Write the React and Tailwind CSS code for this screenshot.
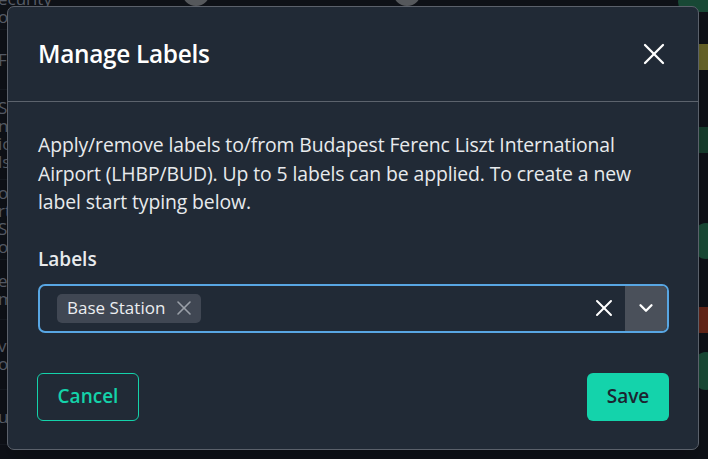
import { X, ChevronDown } from "lucide-react"

const font = { fontFamily: '"Open Sans", "Noto Sans", sans-serif' }

function Backdrop() {
  const leftRows = [
    { h: 'h-[44px]', t: ['ecurity', 'o'] },
    { h: 'h-[60px]', t: ['F'] },
    { h: 'h-[90px]', t: ['S', 'n', 'ic', 'ls'] },
    { h: 'h-[80px]', t: ['o', 'rt', 'S', 'or'] },
    { h: 'h-[60px]', t: ['e', 'm'] },
    { h: 'h-[70px]', t: ['v', 'or'] },
    { h: 'h-[55px]', t: ['ured Safety'] },
  ]

  return (
    <div className="absolute inset-0 flex justify-between">
      {/* left column of page content peeking out */}
      <div className="flex flex-col w-[200px] -mt-[14px] -ml-[2px]">
        {leftRows.map((row, i) => (
          <div key={i} className={`${row.h} flex flex-col justify-center border-b border-[#1b2029] text-[#6b7280] text-[17px] leading-[18px]`}>
            {row.t.map((t, j) => <span key={j}>{t}</span>)}
          </div>
        ))}
      </div>

      <div className="flex-1 relative">
        <div className="absolute left-[-16px] top-[-22px] w-[28px] h-[28px] rounded-full bg-[#6b6e73]" />
        <div className="absolute left-[195px] top-[-22px] w-[28px] h-[28px] rounded-full bg-[#6b6e73]" />
      </div>

      {/* right column with status chips */}
      <div className="flex flex-col w-[30px] items-end">
        <div className="h-[20px] w-[40px] rounded-full bg-[#1f5a43] -mt-[8px] -mr-[10px]" />
        <div className="h-[32px]" />
        <div className="h-[26px] w-[12px] bg-[#7d7a32]" />
        <div className="h-[57px]" />
        <div className="h-[26px] w-[12px] bg-[#1c4a37]" />
        <div className="h-[70px]" />
        <div className="h-[36px] w-[24px] rounded-full bg-[#1f5a43] -mr-[10px]" />
        <div className="h-[48px]" />
        <div className="h-[26px] w-[12px] bg-[#7a2f1e]" />
        <div className="h-[19px]" />
        <div className="h-[38px] w-[24px] rounded-full bg-[#1f5a43] -mr-[10px]" />
      </div>
    </div>
  )
}

export default function App() {
  return (
    <div className="relative w-[708px] h-[459px] overflow-hidden bg-[#12161d]" style={font}>
      <Backdrop />
      <div className="absolute inset-0 bg-black/20" />

      {/* Modal */}
      <div className="absolute left-[7px] top-[6px] w-[692px] h-[444px] flex flex-col rounded-[7px] border border-[#5b616b] bg-[#212a36] shadow-xl">
        <div className="h-[95px] flex items-center justify-between pl-[30px] pr-[26px] border-b border-[#5c636d]">
          <h2 className="text-[24.4px] font-semibold text-white tracking-[-0.3px]">Manage Labels</h2>
          <X className="w-[36px] h-[36px] text-white" strokeWidth={1.5} />
        </div>

        <div className="flex flex-col pl-[30px] pr-[29px] pt-[29px]">
          <p className="text-[19.4px] leading-[28.5px] text-[#e8eaed] tracking-[-0.1px]">
            Apply/remove labels to/from Budapest Ferenc Liszt International Airport (LHBP/BUD). Up to 5 labels can be applied. To create a new label start typing below.
          </p>

          <label className="mt-[30px] text-[19px] font-semibold text-[#e8eaed] leading-[24px]">Labels</label>

          <div className="mt-[13px] h-[49px] flex items-stretch rounded-[7px] border-2 border-[#58a6e3] overflow-hidden">
            <div className="flex-1 flex items-center pl-[17px]">
              <span className="flex items-center h-[29px] rounded-[5px] bg-[#404753] pl-[10px] pr-[5px] gap-[7px] text-[17px] text-[#eceef1]">
                Base Station
                <X className="w-[24px] h-[24px] text-[#9aa0a8]" strokeWidth={1.6} />
              </span>
            </div>
            <div className="flex items-center pr-[7px]">
              <X className="w-[28px] h-[28px] text-white" strokeWidth={1.7} />
            </div>
            <div className="w-[42px] flex items-center justify-center bg-[#4a505a]">
              <ChevronDown className="w-[22px] h-[22px] text-white" strokeWidth={2.5} />
            </div>
          </div>

          <div className="mt-[40px] flex justify-between">
            <button className="h-[48px] w-[102px] -ml-px rounded-[6px] border border-[#14d2aa] text-[#14d2aa] text-[19px] font-semibold">
              Cancel
            </button>
            <button className="h-[48px] w-[82px] rounded-[6px] bg-[#14d3ab] text-[#1c2430] text-[19px] font-semibold">
              Save
            </button>
          </div>
        </div>
      </div>
    </div>
  )
}
